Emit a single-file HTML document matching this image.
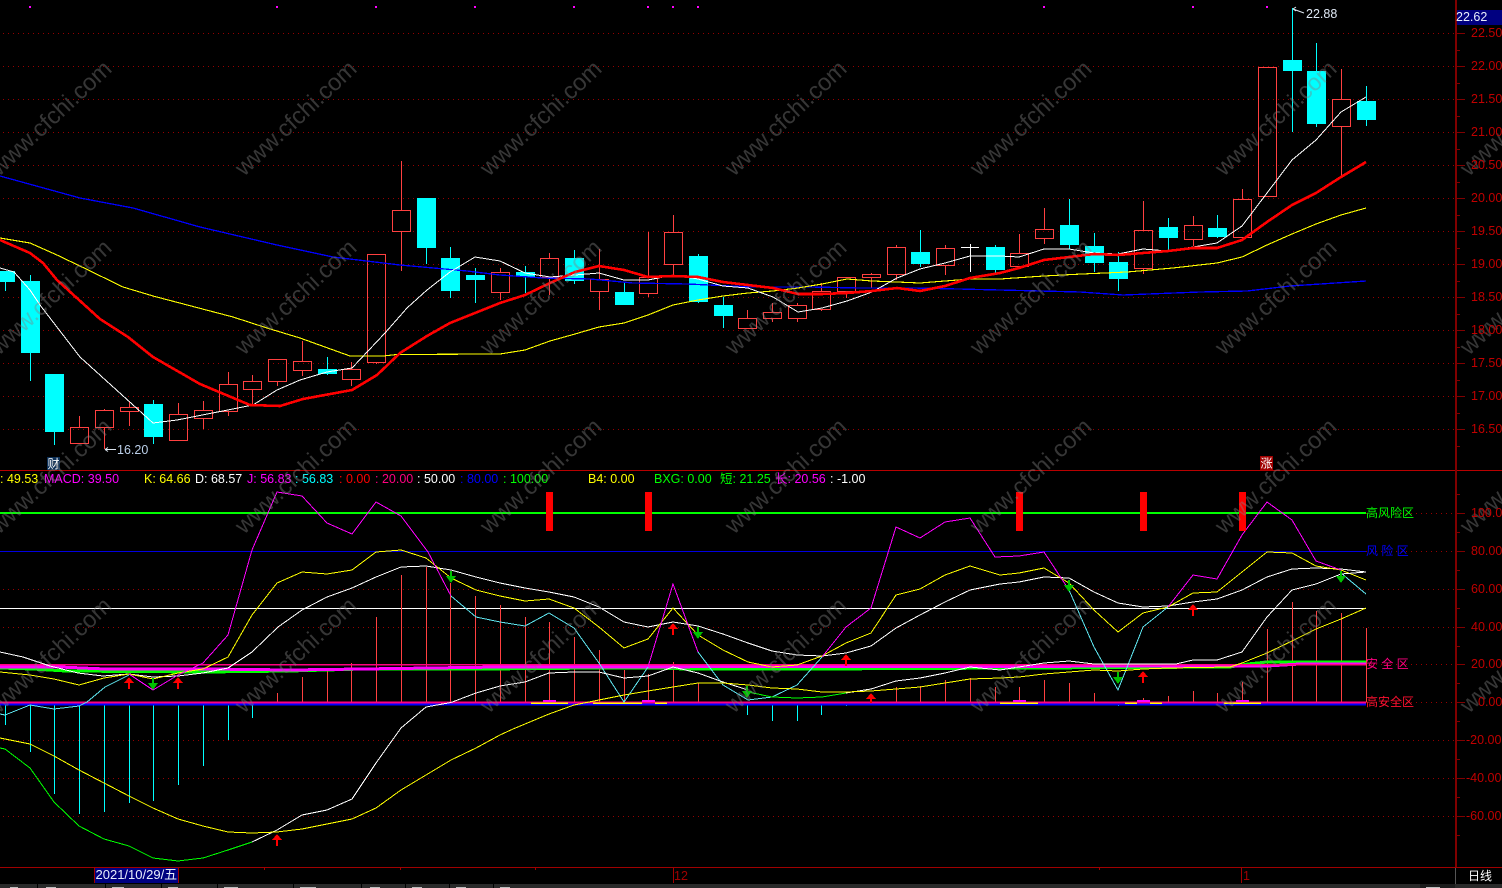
<!DOCTYPE html>
<html><head><meta charset="utf-8"><title>K线图</title>
<style>
html,body{margin:0;padding:0;background:#000;width:1502px;height:888px;overflow:hidden}
svg{display:block;position:absolute;left:0;top:0}
text{font-family:"Liberation Sans","Noto Sans CJK SC",sans-serif;font-size:12.5px}
.ax text{fill:#c00000;font-size:12.5px}
.l{fill:none;shape-rendering:crispEdges}
.w{font-size:23.6px}
</style></head><body>
<svg width="1502" height="888" viewBox="0 0 1502 888" xmlns="http://www.w3.org/2000/svg">
<rect width="1502" height="888" fill="#000"/>
<!-- dotted grid -->
<path stroke="#960000" stroke-dasharray="1 4" fill="none" shape-rendering="crispEdges" d="M3 33.5H1455M3 66.5H1455M3 99.5H1455M3 132.5H1455M3 165.5H1455M3 198.5H1455M3 231.5H1455M3 264.5H1455M3 297.5H1455M3 330.5H1455M3 363.5H1455M3 396.5H1455M3 429.5H1455M3 589.5H1455M3 627.5H1455M3 740.5H1455M3 778.5H1455M3 816.5H1455M1366 513.5H1455M1366 551.5H1455M1366 664.5H1455M1366 702.5H1455"/>
<!-- magenta dots -->
<path fill="#ff00ff" d="M29 6h2v2h-2zM276 6h2v2h-2zM375 6h2v2h-2zM474 6h2v2h-2zM573 6h2v2h-2zM647 6h2v2h-2zM672 6h2v2h-2zM697 6h2v2h-2zM1043 6h2v2h-2zM1192 6h2v2h-2zM1266 6h2v2h-2z"/>
<!-- cyan wicks -->
<path class="l" stroke="#00ffff" d="M5.5 282V291M30.5 275V281M30.5 353V381M54.5 432V445M153.5 400V404M153.5 437V444M327.5 357V369M327.5 374V375M426.5 248V264M450.5 247V258M450.5 291V298M475.5 268V275M475.5 280V303M525.5 266V272M525.5 277V293M574.5 250V258M574.5 281V284M624.5 282V292M698.5 254V256M698.5 302V303M723.5 297V305M723.5 316V328M920.5 230V252M920.5 264V267M995.5 245V247M995.5 270V273M1069.5 199V225M1069.5 245V249M1094.5 233V246M1094.5 263V272M1118.5 252V262M1118.5 279V291M1168.5 218V227M1168.5 238V250M1217.5 215V228M1217.5 237V238M1292.5 8V60M1292.5 71V132M1316.5 43V71M1316.5 124V127M1366.5 86V101M1366.5 120V126"/>
<!-- cyan bodies -->
<path fill="#00ffff" shape-rendering="crispEdges" d="M0 271h15v11h-15zM21 281h19v72h-19zM45 374h19v58h-19zM144 404h19v33h-19zM318 369h19v5h-19zM417 198h19v50h-19zM441 258h19v33h-19zM466 275h19v5h-19zM516 272h19v5h-19zM565 258h19v23h-19zM615 292h19v13h-19zM689 256h19v46h-19zM714 305h19v11h-19zM911 252h19v12h-19zM986 247h19v23h-19zM1060 225h19v20h-19zM1085 246h19v17h-19zM1109 262h19v17h-19zM1159 227h19v11h-19zM1208 228h19v9h-19zM1283 60h19v11h-19zM1307 71h19v53h-19zM1357 101h19v19h-19z"/>
<!-- red candles -->
<path class="l" stroke="#ff4040" d="M79.5 416V427M70.5 427.5h18v16h-18zM104.5 409V411M104.5 428V449M95.5 410.5h18v17h-18zM129.5 401V407M129.5 412V426M120.5 407.5h18v4h-18zM178.5 403V414M169.5 414.5h18v26h-18zM203.5 401V411M203.5 419V429M194.5 410.5h18v8h-18zM228.5 372V384M228.5 411V416M219.5 384.5h18v27h-18zM252.5 375V381M252.5 390V405M243.5 381.5h18v8h-18zM277.5 382V386M268.5 359.5h18v22h-18zM302.5 341V361M302.5 371V376M293.5 361.5h18v9h-18zM351.5 362V369M351.5 380V386M342.5 369.5h18v10h-18zM376.5 362V364M367.5 254.5h18v108h-18zM401.5 161V210M401.5 232V271M392.5 210.5h18v21h-18zM500.5 268V272M500.5 293V300M491.5 272.5h18v20h-18zM549.5 253V258M549.5 277V295M540.5 258.5h18v19h-18zM599.5 249V279M599.5 292V310M590.5 279.5h18v12h-18zM648.5 232V277M648.5 294V297M639.5 277.5h18v16h-18zM673.5 215V232M673.5 265V277M664.5 232.5h18v32h-18zM747.5 310V318M738.5 318.5h18v10h-18zM772.5 303V312M772.5 319V322M763.5 312.5h18v6h-18zM797.5 303V305M797.5 319V322M788.5 305.5h18v13h-18zM821.5 283V291M821.5 309V311M812.5 291.5h18v18h-18zM846.5 291V298M837.5 277.5h18v14h-18zM871.5 273V274M871.5 278V288M862.5 274.5h18v3h-18zM896.5 245V247M896.5 275V280M887.5 247.5h18v27h-18zM945.5 245V248M945.5 266V275M936.5 248.5h18v17h-18zM1019.5 234V253M1010.5 253.5h18v13h-18zM1044.5 208V229M1044.5 239V244M1035.5 229.5h18v9h-18zM1143.5 201V230M1143.5 269V274M1134.5 230.5h18v38h-18zM1193.5 216V225M1193.5 239V246M1184.5 225.5h18v14h-18zM1242.5 189V199M1233.5 199.5h18v38h-18zM1258.5 67.5h18v129h-18zM1341.5 69V99M1341.5 127V177M1332.5 99.5h18v27h-18z"/>
<!-- doji -->
<path class="l" stroke="#fff" d="M961 247.5H979M970.5 244V272"/>
<!-- MAs -->
<polyline class="l" stroke="#0000ff" stroke-width="1.3" points="0,176 80,198 133,208 200,227 277,245 333,257 400,265 467,271 500,275 543,278 590,279 633,283 687,284 753,287 810,287 860,288 913,288 958,289 1000,290 1080,292 1123,295 1200,292 1247,291 1290,286 1366,281"/>
<polyline class="l" stroke="#ffff00" stroke-width="1.1" points="0,238 30,243 57,255 82,267 123,287 153,296 233,317 267,328 300,338 350,356 383,356 397,354.5 500,354 525,350 550,341 575,334 599,327 624,323 648,315 673,305 698,300 723,296 748,293 773,291 798,288 822,284 847,279 872,281 897,282 920,283 945,281 970,279 1000,279 1044,276 1082,274 1127,272 1173,268 1217,263 1242,257 1267,245 1292,234 1316,224 1341,215 1366,208"/>
<polyline class="l" stroke="#ffffff" points="0,268 14,272 30,290 40,305 80,357 153,423 177,420 253,405 277,390 300,380 327,372 352,368 385,333 407,308 427,290 450,272 475,257 500,261 525,273 550,277 575,275 599,273 624,280 648,280 673,275 698,279 723,286 748,288 773,297 798,312 822,308 847,301 872,292 897,278 920,269 945,263 970,256 1000,256 1019,257 1044,249 1069,249 1094,253 1118,254 1143,249 1168,251 1193,247 1217,243 1242,226 1267,193 1292,160 1316,140 1341,112 1366,97"/>
<polyline class="l" stroke="#ff0000" stroke-width="2.6" points="0,240 30,253 43,263 57,280 100,319 128,337 153,357 200,384 250,405 280,406 303,399 352,390 377,375 400,353 427,336 450,323 500,303 525,295 550,283 575,272 599,266 624,270 648,277 673,276 698,277 723,282 748,285 773,288 798,294 822,294 847,293 872,291 897,288 920,291 945,286 970,278 1000,273 1019,268 1044,260 1069,257 1094,254 1118,255 1143,253 1168,251 1193,248 1217,248 1242,240 1267,222 1292,205 1316,193 1341,177 1366,162"/>
<!-- high/low marks -->
<path fill="none" stroke="#dde6f0" d="M1293 9L1304 13M1293 9l3 -2M1293 9l3 2M105 449.5H116M105 449.5l3 -2M105 449.5l3 2"/>
<text x="1306" y="18" fill="#dfe8f4">22.88</text>
<text x="117" y="454" fill="#bcd0ea">16.20</text>
<!-- tags -->
<rect x="47" y="457" width="13" height="13" fill="#0c2f56"/>
<text x="47.5" y="468" fill="#fff" style="font-size:12px">财</text>
<rect x="1260" y="456" width="13" height="14" fill="#a00000"/>
<text x="1260.5" y="467.5" fill="#fff" style="font-size:12px">涨</text>
<!-- panel separator -->
<path stroke="#b80000" shape-rendering="crispEdges" d="M0 470.5H1502"/>
<!-- header values -->
<text y="483">
<tspan x="0" fill="#ffff00">: 49.53</tspan>
<tspan x="44" fill="#ff00ff">MACD: 39.50</tspan>
<tspan x="144" fill="#ffff00">K: 64.66</tspan>
<tspan x="195" fill="#ffffff">D: 68.57</tspan>
<tspan x="247" fill="#ff00ff">J: 56.83</tspan>
<tspan x="295" fill="#00ffff">: 56.83</tspan>
<tspan x="339" fill="#ff0000">: 0.00</tspan>
<tspan x="375" fill="#ff0080">: 20.00</tspan>
<tspan x="417" fill="#ffffff">: 50.00</tspan>
<tspan x="460" fill="#0000ff">: 80.00</tspan>
<tspan x="503" fill="#00ff00">: 100.00</tspan>
<tspan x="588" fill="#ffff00">B4: 0.00</tspan>
<tspan x="654" fill="#00ff00">BXG: 0.00</tspan>
<tspan x="720" fill="#00ff00">短: 21.25</tspan>
<tspan x="775" fill="#ff00ff">长: 20.56</tspan>
<tspan x="830" fill="#ffffff">: -1.00</tspan>
</text>
<!-- level lines -->
<path stroke="#00ff00" stroke-width="2" d="M0 513H1366" shape-rendering="crispEdges"/>
<path stroke="#0000e0" d="M0 551.5H1366" shape-rendering="crispEdges"/>
<path stroke="#ffffff" d="M0 608.5H1366" shape-rendering="crispEdges"/>
<!-- macd histogram -->
<path class="l" stroke="#ff4040" d="M277.5 702V693M302.5 702V677M327.5 702V669M351.5 702V663M376.5 702V617M401.5 702V575M426.5 702V567M450.5 702V583M475.5 702V596M500.5 702V605M525.5 702V617M549.5 702V622M574.5 702V637M599.5 702V650M624.5 702V670M648.5 702V674M673.5 702V662M698.5 702V683M871.5 702V694M896.5 702V687M920.5 702V686M945.5 702V680M970.5 702V678M995.5 702V687M1019.5 702V687M1044.5 702V680M1069.5 702V683M1094.5 702V693M1143.5 702V698M1168.5 702V696M1193.5 702V691M1217.5 702V693M1242.5 702V682M1267.5 702V629M1292.5 702V602M1316.5 702V611M1341.5 702V613M1366.5 702V628"/>
<path class="l" stroke="#00ffff" d="M5.5 703V725M30.5 703V752M54.5 703V794M79.5 703V814M104.5 703V812M129.5 703V803M153.5 703V801M178.5 703V785M203.5 703V766M228.5 703V740M252.5 703V718M747.5 703V715M772.5 703V721M797.5 703V721M821.5 703V715M846.5 703V706M1118.5 703V706"/>
<!-- green stripe + magenta + pink bands at 20 -->
<polyline class="l" stroke="#00ff00" stroke-width="3" points="0,668 33,669 66,671 205,672 290,671 362,669 480,669 600,668 660,668 685,669 810,669 1230,667 1248,664 1267,662 1366,662"/>
<polyline class="l" stroke="#ff00ff" stroke-width="3" points="0,667 60,667 105,669 210,669 290,670 362,669 500,667 1267,666 1300,664 1366,664"/>
<path stroke="#ff0080" stroke-width="1.5" d="M0 664.7H1366" shape-rendering="crispEdges"/>
<!-- zero bands -->
<path stroke="#0000ff" stroke-width="2" d="M0 704.5H1366" shape-rendering="crispEdges"/>
<path stroke="#ff0080" stroke-width="2" d="M0 702.5H1366" shape-rendering="crispEdges"/>
<path stroke="#ffff00" stroke-width="1.5" d="M531 703H568M593 703H634M630 703H642M655 703H667M1000 703H1038M1125 703H1137M1150 703H1162M1224 703H1261" shape-rendering="crispEdges"/>
<path stroke="#ff00ff" stroke-width="2" d="M543 701H556M642 701H655M1013 701H1026M1137 701H1150M1236 701H1249" shape-rendering="crispEdges"/>
<!-- D white -->
<polyline class="l" stroke="#ffffff" points="0,652 23,657 50,666 78,673 103,676 129,674 153,677 178,676 203,673 228,668 252,652 278,627 302,610 327,597 352,588 376,577 401,567 426,566 451,570 476,577 500,583 525,588 549,592 574,597 599,607 624,622 648,627 673,622 698,626 723,634 748,643 772,651 797,655 822,656 846,653 871,646 896,628 920,615 945,602 970,590 1000,584 1019,582 1044,577 1069,578 1094,592 1118,603 1143,607 1168,606 1193,602 1217,599 1242,590 1267,577 1292,569 1316,568 1341,569 1366,572"/>
<!-- K yellow -->
<polyline class="l" stroke="#ffff00" points="0,672 30,675 54,679 79,685 104,678 129,674 153,679 178,673 203,669 228,657 252,615 277,583 302,572 327,574 352,570 376,552 401,550 426,558 451,578 476,590 500,596 525,601 549,599 574,608 599,627 624,648 648,639 673,608 698,635 723,650 748,662 772,667 797,665 822,656 846,643 871,633 896,595 920,589 945,575 970,566 1000,575 1019,573 1044,568 1069,583 1094,610 1118,632 1143,613 1168,607 1193,593 1217,592 1242,572 1267,552 1292,553 1316,566 1341,570 1366,580"/>
<!-- J magenta/cyan -->
<polyline class="l" stroke="#5fe6f0" points="0,714 5,715 30,705 54,709 79,706 87,702 105,687 129,675"/>
<polyline class="l" stroke="#ff00ff" points="129,674 153,690 178,675 203,663 228,635 252,550 277,492 302,496 327,523 352,534 376,502 401,516 428,552 451,596"/>
<polyline class="l" stroke="#5fe6f0" points="451,596 476,617 500,622 525,626 549,613 574,628 599,663 624,702 648,667"/>
<polyline class="l" stroke="#ff00ff" points="648,667 673,584 698,652"/>
<polyline class="l" stroke="#5fe6f0" points="698,652 723,685 748,700 772,697 797,685 822,657"/>
<polyline class="l" stroke="#ff00ff" points="822,657 846,627 871,608 896,527 920,538 945,522 970,518 995,557 1019,556 1044,552 1069,590"/>
<polyline class="l" stroke="#5fe6f0" points="1069,590 1094,647 1118,690 1143,627 1168,607"/>
<polyline class="l" stroke="#ff00ff" points="1168,607 1193,575 1217,579 1242,535 1267,502 1292,520 1316,561 1341,570"/>
<polyline class="l" stroke="#5fe6f0" points="1341,573 1366,594"/>
<!-- short line -->
<polyline class="l" stroke="#00ff00" points="0,748 5,749 30,768 54,802 79,826 104,839 129,846 153,858 178,861 203,858 228,850 252,842"/>
<polyline class="l" stroke="#ffffff" points="252,842 277,830 302,815 327,810 352,799 376,763 401,728 426,707 451,702.5 476,693 500,686 525,682 549,673 574,672 599,672 624,678 648,676 673,667 698,673 723,682 748,690"/>
<polyline class="l" stroke="#00ff00" points="748,692 772,697 797,698 822,697 846,693"/>
<polyline class="l" stroke="#ffffff" points="846,693 871,689 896,681 920,678 945,673 970,667 1000,670 1019,667 1044,663 1069,661 1094,664 1176,664 1193,660 1217,660 1242,652 1267,617 1292,590 1316,584 1341,574 1366,572"/>
<!-- long line -->
<polyline class="l" stroke="#ffff00" points="0,738 30,744 54,756 79,770 104,783 129,796 153,808 178,819 203,826 228,832 252,833 277,832 302,829 327,824 352,819 376,808 401,790 426,775 451,760 476,748 500,735 513,729 549,714 574,705 599,700 624,695 648,691 673,687 698,683 723,683 748,685 772,688 797,689 822,692 846,692 871,691 896,689 920,687 945,683 970,679 1000,678 1019,677 1044,674 1069,672 1094,670 1118,671 1143,669 1168,668 1230,667 1242,663 1267,653 1292,641 1316,629 1341,619 1366,608"/>
<!-- arrows -->
<g fill="#ff0000" shape-rendering="crispEdges">
<path d="M129 677l5 6h-4v6h-2v-6h-4zM178 677l5 6h-4v6h-2v-6h-4zM673 623l5 6h-4v6h-2v-6h-4zM846 654l5 6h-4v6h-2v-6h-4zM871 693l5 6h-4v4h-2v-4h-4zM1143 671l5 6h-4v6h-2v-6h-4zM1193 604l5 6h-4v6h-2v-6h-4zM277 834l5 6h-4v6h-2v-6h-4z"/>
</g>
<g fill="#00c000" shape-rendering="crispEdges">
<path d="M152 678h2v5h4l-5 7l-5-7h4zM450 571h2v5h4l-5 7l-5-7h4zM697 627h2v5h4l-5 7l-5-7h4zM746 686h2v5h4l-5 7l-5-7h4zM1068 580h2v5h4l-5 7l-5-7h4zM1117 672h2v5h4l-5 7l-5-7h4zM1340 571h2v5h4l-5 7l-5-7h4z"/>
</g>
<!-- red bars -->
<path fill="#ff0000" d="M546 492h7v39h-7zM645 492h7v39h-7zM1016 492h7v39h-7zM1140 492h7v39h-7zM1239 492h7v39h-7z"/>
<!-- zone labels -->
<g style="font-size:12px">
<text x="1366" y="517" fill="#00ff00" style="font-size:12px">高风险区</text>
<text x="1366" y="555" fill="#0000ff" style="font-size:12px">风 险 区</text>
<text x="1366" y="668" fill="#ff0080" style="font-size:12px">安 全 区</text>
<text x="1366" y="706" fill="#ff1030" style="font-size:12px">高安全区</text>
</g>
<!-- watermark -->
<g fill="rgba(128,128,128,.42)">
<text class="w" transform="translate(-1,177) rotate(-43)">www.cfchi.com</text>
<text class="w" transform="translate(244,177) rotate(-43)">www.cfchi.com</text>
<text class="w" transform="translate(489,177) rotate(-43)">www.cfchi.com</text>
<text class="w" transform="translate(734,177) rotate(-43)">www.cfchi.com</text>
<text class="w" transform="translate(979,177) rotate(-43)">www.cfchi.com</text>
<text class="w" transform="translate(1224,177) rotate(-43)">www.cfchi.com</text>
<text class="w" transform="translate(1469,177) rotate(-43)">www.cfchi.com</text>
<text class="w" transform="translate(-1,356) rotate(-43)">www.cfchi.com</text>
<text class="w" transform="translate(244,356) rotate(-43)">www.cfchi.com</text>
<text class="w" transform="translate(489,356) rotate(-43)">www.cfchi.com</text>
<text class="w" transform="translate(734,356) rotate(-43)">www.cfchi.com</text>
<text class="w" transform="translate(979,356) rotate(-43)">www.cfchi.com</text>
<text class="w" transform="translate(1224,356) rotate(-43)">www.cfchi.com</text>
<text class="w" transform="translate(1469,356) rotate(-43)">www.cfchi.com</text>
<text class="w" transform="translate(-1,535) rotate(-43)">www.cfchi.com</text>
<text class="w" transform="translate(244,535) rotate(-43)">www.cfchi.com</text>
<text class="w" transform="translate(489,535) rotate(-43)">www.cfchi.com</text>
<text class="w" transform="translate(734,535) rotate(-43)">www.cfchi.com</text>
<text class="w" transform="translate(979,535) rotate(-43)">www.cfchi.com</text>
<text class="w" transform="translate(1224,535) rotate(-43)">www.cfchi.com</text>
<text class="w" transform="translate(1469,535) rotate(-43)">www.cfchi.com</text>
<text class="w" transform="translate(-1,714) rotate(-43)">www.cfchi.com</text>
<text class="w" transform="translate(244,714) rotate(-43)">www.cfchi.com</text>
<text class="w" transform="translate(489,714) rotate(-43)">www.cfchi.com</text>
<text class="w" transform="translate(734,714) rotate(-43)">www.cfchi.com</text>
<text class="w" transform="translate(979,714) rotate(-43)">www.cfchi.com</text>
<text class="w" transform="translate(1224,714) rotate(-43)">www.cfchi.com</text>
<text class="w" transform="translate(1469,714) rotate(-43)">www.cfchi.com</text>
</g>
<!-- right axis -->
<path stroke="#800000" stroke-width="2" d="M1456 0V867" shape-rendering="crispEdges"/>
<path stroke="#800000" fill="none" shape-rendering="crispEdges" d="M1457 33.5h8M1457 66.5h8M1457 99.5h8M1457 132.5h8M1457 165.5h8M1457 198.5h8M1457 231.5h8M1457 264.5h8M1457 297.5h8M1457 330.5h8M1457 363.5h8M1457 396.5h8M1457 429.5h8M1457 50.5h3M1457 83.5h3M1457 116.5h3M1457 149.5h3M1457 182.5h3M1457 215.5h3M1457 248.5h3M1457 281.5h3M1457 314.5h3M1457 347.5h3M1457 380.5h3M1457 413.5h3M1457 446.5h3M1457 513.5h8M1457 551.5h8M1457 589.5h8M1457 627.5h8M1457 664.5h8M1457 702.5h8M1457 740.5h8M1457 778.5h8M1457 816.5h8M1457 494.5h3M1457 532.5h3M1457 570.5h3M1457 608.5h3M1457 646.5h3M1457 683.5h3M1457 721.5h3M1457 759.5h3M1457 797.5h3M1457 835.5h3"/>
<rect x="1457" y="10" width="45" height="15" fill="#000080"/>
<text x="1456" y="21" fill="#e8eefc">22.62</text>
<g class="ax">
<text x="1471" y="37">22.50</text><text x="1471" y="70">22.00</text><text x="1471" y="103">21.50</text><text x="1471" y="136">21.00</text><text x="1471" y="169">20.50</text><text x="1471" y="202">20.00</text><text x="1471" y="235">19.50</text><text x="1471" y="268">19.00</text><text x="1471" y="301">18.50</text><text x="1471" y="334">18.00</text><text x="1471" y="367">17.50</text><text x="1471" y="400">17.00</text><text x="1471" y="433">16.50</text>
<text x="1471" y="517">100.00</text><text x="1471" y="555">80.00</text><text x="1471" y="593">60.00</text><text x="1471" y="631">40.00</text><text x="1471" y="668">20.00</text><text x="1478" y="706">0.00</text><text x="1466" y="744">-20.00</text><text x="1466" y="782">-40.00</text><text x="1466" y="820">-60.00</text>
</g>
<!-- time axis -->
<path stroke="#a00000" shape-rendering="crispEdges" d="M0 867.5H1502M264.5 868V870M400.5 868V870M1099.5 868V870M535.5 868V870"/>
<rect x="95" y="868" width="84" height="15" fill="#000080"/>
<path stroke="#a00000" shape-rendering="crispEdges" d="M94.5 868V883M178.5 868V883M673.5 868V883M1241.5 868V883"/>
<text x="95.5" y="879" fill="#e8eefc" style="font-size:13px">2021/10/29/五</text>
<text x="674" y="880" fill="#a00000">12</text>
<text x="1243" y="880" fill="#a00000">1</text>
<path stroke="#555" shape-rendering="crispEdges" d="M1455.5 868V884"/>
<text x="1468" y="880" fill="#fff" style="font-size:12px">日线</text>
<!-- bottom strip -->
<rect x="0" y="884" width="1502" height="4" fill="#2a2a2a"/>
<path stroke="#000" shape-rendering="crispEdges" d="M37.5 884V888M105.5 884V888M161.5 884V888M217.5 884V888M293.5 884V888M361.5 884V888M405.5 884V888M449.5 884V888M493.5 884V888"/>
<rect x="1420" y="884" width="35" height="4" fill="#1c1c1c"/>
<path fill="#bdbdbd" d="M10 887h8v1h-8zM46 887h10v1h-10zM112 887h12v1h-12zM168 887h10v1h-10zM224 887h14v1h-14zM300 887h16v1h-16zM370 887h10v1h-10zM412 887h10v1h-10zM456 887h10v1h-10zM500 887h10v1h-10zM1426 887h14v1h-14z"/>
</svg>
</body></html>
